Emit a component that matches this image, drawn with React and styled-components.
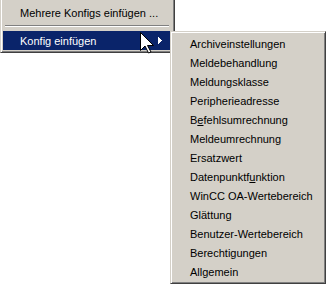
import React from 'react'
import styled, { createGlobalStyle } from 'styled-components'

const GlobalStyle = createGlobalStyle`
  html, body {
    margin: 0;
    padding: 0;
    background: #ffffff;
  }
`

const Screen = styled.div`
  position: relative;
  width: 326px;
  height: 284px;
  overflow: hidden;
  background: #ffffff;
  font-family: 'Liberation Sans', Arial, sans-serif;
  font-size: 11px;
  color: #000000;
`

const MainMenu = styled.div`
  box-sizing: border-box;
  width: 175px;
  display: flex;
  flex-direction: column;
  background: #d4d0c8;
  border-left: 1px solid #d4d0c8;
  border-right: 1px solid #404040;
  border-bottom: 1px solid #404040;
  box-shadow: inset 1px 0 #ffffff, inset -1px -1px #808080;
  padding: 3px 2px 2px 2px;
`

const SubMenu = styled.div`
  position: absolute;
  left: 170px;
  top: 31px;
  box-sizing: border-box;
  width: 156px;
  height: 253px;
  display: flex;
  flex-direction: column;
  background: #d4d0c8;
  border-top: 1px solid #d4d0c8;
  border-left: 1px solid #d4d0c8;
  border-right: 1px solid #404040;
  border-bottom: 1px solid #404040;
  box-shadow: inset 1px 1px #ffffff, inset -1px -1px #808080;
  padding: 2px;
`

const Item = styled.div`
  display: flex;
  align-items: center;
  height: 19px;
  line-height: 20px;
  padding-left: 17px;
  white-space: nowrap;
  background: ${({ $active }) => ($active ? '#0a246a' : 'transparent')};
  color: ${({ $active }) => ($active ? '#ffffff' : '#000000')};
`

const Label = styled.span`
  flex: 1;
  height: 19px;
`

const Key = styled.span`
  text-decoration: underline;
`

const Separator = styled.div`
  box-sizing: border-box;
  height: 9px;
  padding-top: 3px;
  margin: 0 3px 0 2px;

  &::before {
    content: '';
    display: block;
    border-top: 1px solid #808080;
    border-bottom: 1px solid #ffffff;
  }
`

const ArrowSvg = styled.svg`
  display: block;
  width: 4px;
  height: 7px;
  margin-right: 10px;
  flex: none;
`

const CursorSvg = styled.svg`
  position: absolute;
  left: 140px;
  top: 32px;
  width: 14px;
  height: 22px;
`

const SubArrow = () => (
  <ArrowSvg viewBox="0 0 4 7" shapeRendering="crispEdges">
    <rect x="0" y="0" width="1" height="7" fill="#fff" />
    <rect x="1" y="1" width="1" height="5" fill="#fff" />
    <rect x="2" y="2" width="1" height="3" fill="#fff" />
    <rect x="3" y="3" width="1" height="1" fill="#fff" />
  </ArrowSvg>
)

const Cursor = () => (
  <CursorSvg viewBox="0 0 14 22">
    <path
      d="M0.5,0.5 L0.5,18.5 L5,14 L8.5,21 L11,20 L7.5,13.5 L13.5,13.5 Z"
      fill="#ffffff"
      stroke="#000000"
      strokeWidth="1"
      strokeLinejoin="miter"
    />
  </CursorSvg>
)

const subItems = [
  ['Archiveinstellungen'],
  ['Meldebehandlung'],
  ['Meldungsklasse'],
  ['Peripherieadresse'],
  ['B', 'e', 'fehlsumrechnung'],
  ['Meldeumrechnung'],
  ['Ersatzwert'],
  ['Datenpunktf', 'u', 'nktion'],
  ['WinCC OA-Wertebereich'],
  ['Glättung'],
  ['Benutzer-Wertebereich'],
  ['Berechtigungen'],
  ['Allgemein'],
]

const ItemText = ({ parts }) => {
  if (parts.length === 1) return <Label>{parts[0]}</Label>
  return (
    <Label>
      {parts[0]}
      <Key>{parts[1]}</Key>
      {parts[2]}
    </Label>
  )
}

export default function App() {
  return (
    <Screen>
      <GlobalStyle />
      <MainMenu>
        <Item>
          <Label>Mehrere Konfigs einfügen ...</Label>
        </Item>
        <Separator />
        <Item $active>
          <Label>Konfig einfügen</Label>
          <SubArrow />
        </Item>
      </MainMenu>
      <SubMenu>
        {subItems.map(parts => (
          <Item key={parts.join('')}>
            <ItemText parts={parts} />
          </Item>
        ))}
      </SubMenu>
      <Cursor />
    </Screen>
  )
}
